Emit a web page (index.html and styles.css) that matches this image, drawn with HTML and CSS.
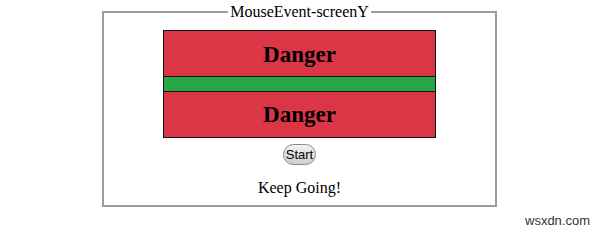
FILE: index.html
```html
<!DOCTYPE html>
<html lang="en">
<head>
    <meta charset="UTF-8">
    <title>MouseEvent-screenY</title>
    <link rel="stylesheet" href="styles.css">
</head>
<body>
    <fieldset class="panel">
        <legend>MouseEvent-screenY</legend>
        <div class="zone">
            <div class="danger">Danger</div>
            <div class="safe"></div>
            <div class="danger">Danger</div>
        </div>
        <button id="startBtn">Start</button>
        <div id="status">Keep Going!</div>
    </fieldset>
    <div class="watermark">wsxdn.com</div>
</body>
</html>
```

FILE: styles.css
```css
* {
    box-sizing: border-box;
}

body {
    margin: 0;
    width: 600px;
    height: 231px;
    background: #ffffff;
    font-family: 'Liberation Serif', serif;
    color: #000;
    position: relative;
}

.panel {
    width: 395px;
    height: 203px;
    margin: 4px 0 0 102px;
    padding: 0;
    border: 2px solid #9c9c9c;
    text-align: center;
}

.panel legend {
    margin: 0 auto;
    padding: 0 2px;
    font-size: 16px;
    line-height: 16px;
}

.zone {
    width: 273px;
    margin: 10px auto 0;
    border: 1px solid #111;
}

.danger {
    background: #dc3545;
    font-size: 23px;
    font-weight: bold;
    line-height: 22px;
}

.zone .danger:first-child {
    height: 45px;
    padding-top: 13px;
}

.zone .danger:last-child {
    height: 45px;
    padding-top: 12px;
}

.safe {
    height: 16px;
    background: #28a745;
    border-top: 1px solid #111;
    border-bottom: 1px solid #111;
}

#startBtn {
    margin-top: 6px;
    padding: 1px 2px;
    font-family: 'Liberation Sans', sans-serif;
    font-size: 13px;
    color: #000;
    background: linear-gradient(#f2f2f2, #cfcfcf);
    border: 1px solid #8a8a8a;
    border-radius: 11px;
    height: 21px;
}

#status {
    margin-top: 14px;
    font-size: 16px;
}

.watermark {
    position: absolute;
    left: 525px;
    top: 213px;
    font-family: 'Liberation Sans', sans-serif;
    font-size: 13px;
    color: #333;
}
```
